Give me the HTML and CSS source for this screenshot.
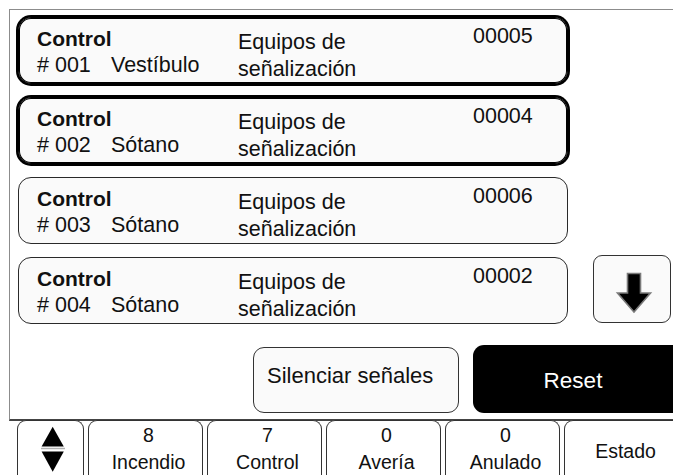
FILE: index.html
```html
<!DOCTYPE html>
<html lang="es">
<head>
<meta charset="utf-8">
<title>Panel</title>
<link rel="stylesheet" href="styles.css">
</head>
<body>
<div class="screen">
  <section class="panel">
    <div class="list">
      <div class="card card--selected">
        <div class="card__id">
          <div class="card__type">Control</div>
          <div class="card__loc"><span class="card__num"># 001</span><span>Vestíbulo</span></div>
        </div>
        <div class="card__desc">Equipos de<br>señalización</div>
        <div class="card__count">00005</div>
      </div>
      <div class="card card--selected">
        <div class="card__id">
          <div class="card__type">Control</div>
          <div class="card__loc"><span class="card__num"># 002</span><span>Sótano</span></div>
        </div>
        <div class="card__desc">Equipos de<br>señalización</div>
        <div class="card__count">00004</div>
      </div>
      <div class="card">
        <div class="card__id">
          <div class="card__type">Control</div>
          <div class="card__loc"><span class="card__num"># 003</span><span>Sótano</span></div>
        </div>
        <div class="card__desc">Equipos de<br>señalización</div>
        <div class="card__count">00006</div>
      </div>
      <div class="card">
        <div class="card__id">
          <div class="card__type">Control</div>
          <div class="card__loc"><span class="card__num"># 004</span><span>Sótano</span></div>
        </div>
        <div class="card__desc">Equipos de<br>señalización</div>
        <div class="card__count">00002</div>
      </div>
      <button class="scroll-btn" type="button" aria-label="Bajar">
        <svg class="scroll-btn__icon" width="76" height="66" viewBox="0 0 76 66">
          <polygon points="33.5,17.5 46.5,17.5 46.5,37 56.5,37 40,56 23.5,37 33.5,37" fill="#000" stroke="#7a7a7a" stroke-width="1.6" stroke-linejoin="miter"/>
        </svg>
      </button>
    </div>
    <div class="actions">
      <button class="btn btn--outline" type="button">Silenciar señales</button>
      <button class="btn btn--primary" type="button">Reset</button>
    </div>
  </section>
  <nav class="tabs">
    <div class="tab tab--nav">
      <svg class="tab__arrows" width="64" height="54" viewBox="0 0 64 54">
        <polygon points="33.7,5.7 44.8,25.5 22.6,25.5" fill="#000"/>
        <line x1="22" y1="27.5" x2="46" y2="27.5" stroke="#b0b0b0" stroke-width="1.5"/>
        <polygon points="22.6,30.5 44.8,30.5 33.7,50.7" fill="#000"/>
      </svg>
    </div>
    <div class="tab"><span>8</span><span>Incendio</span></div>
    <div class="tab"><span>7</span><span>Control</span></div>
    <div class="tab"><span>0</span><span>Avería</span></div>
    <div class="tab"><span>0</span><span>Anulado</span></div>
    <div class="tab tab--wide"><span>Estado</span></div>
  </nav>
</div>
</body>
</html>
```
FILE: styles.css
```css
html, body {
  margin: 0;
  padding: 0;
}

body {
  width: 673px;
  height: 475px;
  overflow: hidden;
  background: #fff;
  font-family: "Liberation Sans", Arial, sans-serif;
  color: #111;
}

.screen {
  width: 673px;
  height: 475px;
  overflow: hidden;
  box-sizing: border-box;
  padding-top: 9px;
}

.panel {
  box-sizing: border-box;
  width: 700px;
  height: 412px;
  margin-left: 9px;
  padding: 7px 0 0 8px;
  border-left: 1px solid #8c8c8c;
  border-top: 1px solid #8c8c8c;
  border-bottom: 2px solid #444;
}

.list {
  display: grid;
  grid-template-columns: 550px 78px;
  grid-template-rows: repeat(4, 67px);
  column-gap: 25px;
  row-gap: 13px;
}

.card {
  grid-column: 1;
  box-sizing: border-box;
  height: 67px;
  display: grid;
  grid-template-columns: 201px 235px auto;
  padding-left: 18px;
  border: 1px solid #2a2a2a;
  border-radius: 13px;
  background: #fafafa;
  font-size: 21.5px;
}

.card--selected {
  border-color: #000;
  box-shadow: 0 0 0 2px #000, inset 0 0 0 1px #000;
}

.card__id {
  padding-top: 7px;
  line-height: 27px;
}

.card__type {
  font-weight: bold;
  font-size: 21px;
}

.card__loc {
  display: flex;
  white-space: nowrap;
}

.card__num {
  width: 74px;
}

.card__desc {
  padding-top: 11px;
  line-height: 27px;
  white-space: nowrap;
}

.card__count {
  padding-top: 5px;
  line-height: 27px;
}

.scroll-btn {
  grid-column: 2;
  grid-row: 4;
  align-self: start;
  box-sizing: border-box;
  width: 78px;
  height: 68px;
  margin-top: -2px;
  padding: 0;
  border: 1px solid #333;
  border-radius: 9px;
  background: #fafafa;
}

.scroll-btn__icon {
  display: block;
}

.actions {
  display: flex;
  align-items: flex-end;
  gap: 14px;
  margin-top: 21px;
  padding-left: 235px;
}

.btn {
  box-sizing: border-box;
  font-family: inherit;
  font-size: 22px;
  border-radius: 11px;
  flex-shrink: 0;
}

.btn--outline {
  width: 206px;
  height: 66px;
  padding: 0 0 8px 13px;
  text-align: left;
  border: 1px solid #333;
  background: #fafafa;
  color: #111;
}

.btn--primary {
  width: 212px;
  height: 68px;
  padding: 3px 12px 0 0;
  border: none;
  background: #000;
  color: #fff;
  font-size: 22.5px;
}

.tabs {
  display: flex;
  gap: 4px;
  margin-top: -1px;
  padding-left: 17px;
}

.tab {
  flex-shrink: 0;
  box-sizing: border-box;
  width: 115px;
  height: 60px;
  display: flex;
  flex-direction: column;
  align-items: center;
  padding: 1px 0 0 6px;
  border: 1px solid #333;
  border-bottom: none;
  border-radius: 9px 9px 0 0;
  background: #fff;
  font-size: 19.5px;
  line-height: 27px;
}

.tab--nav {
  width: 67px;
  padding: 0;
}

.tab__arrows {
  display: block;
}

.tab--wide {
  width: 123px;
  padding: 17px 0 0 0;
}
```
